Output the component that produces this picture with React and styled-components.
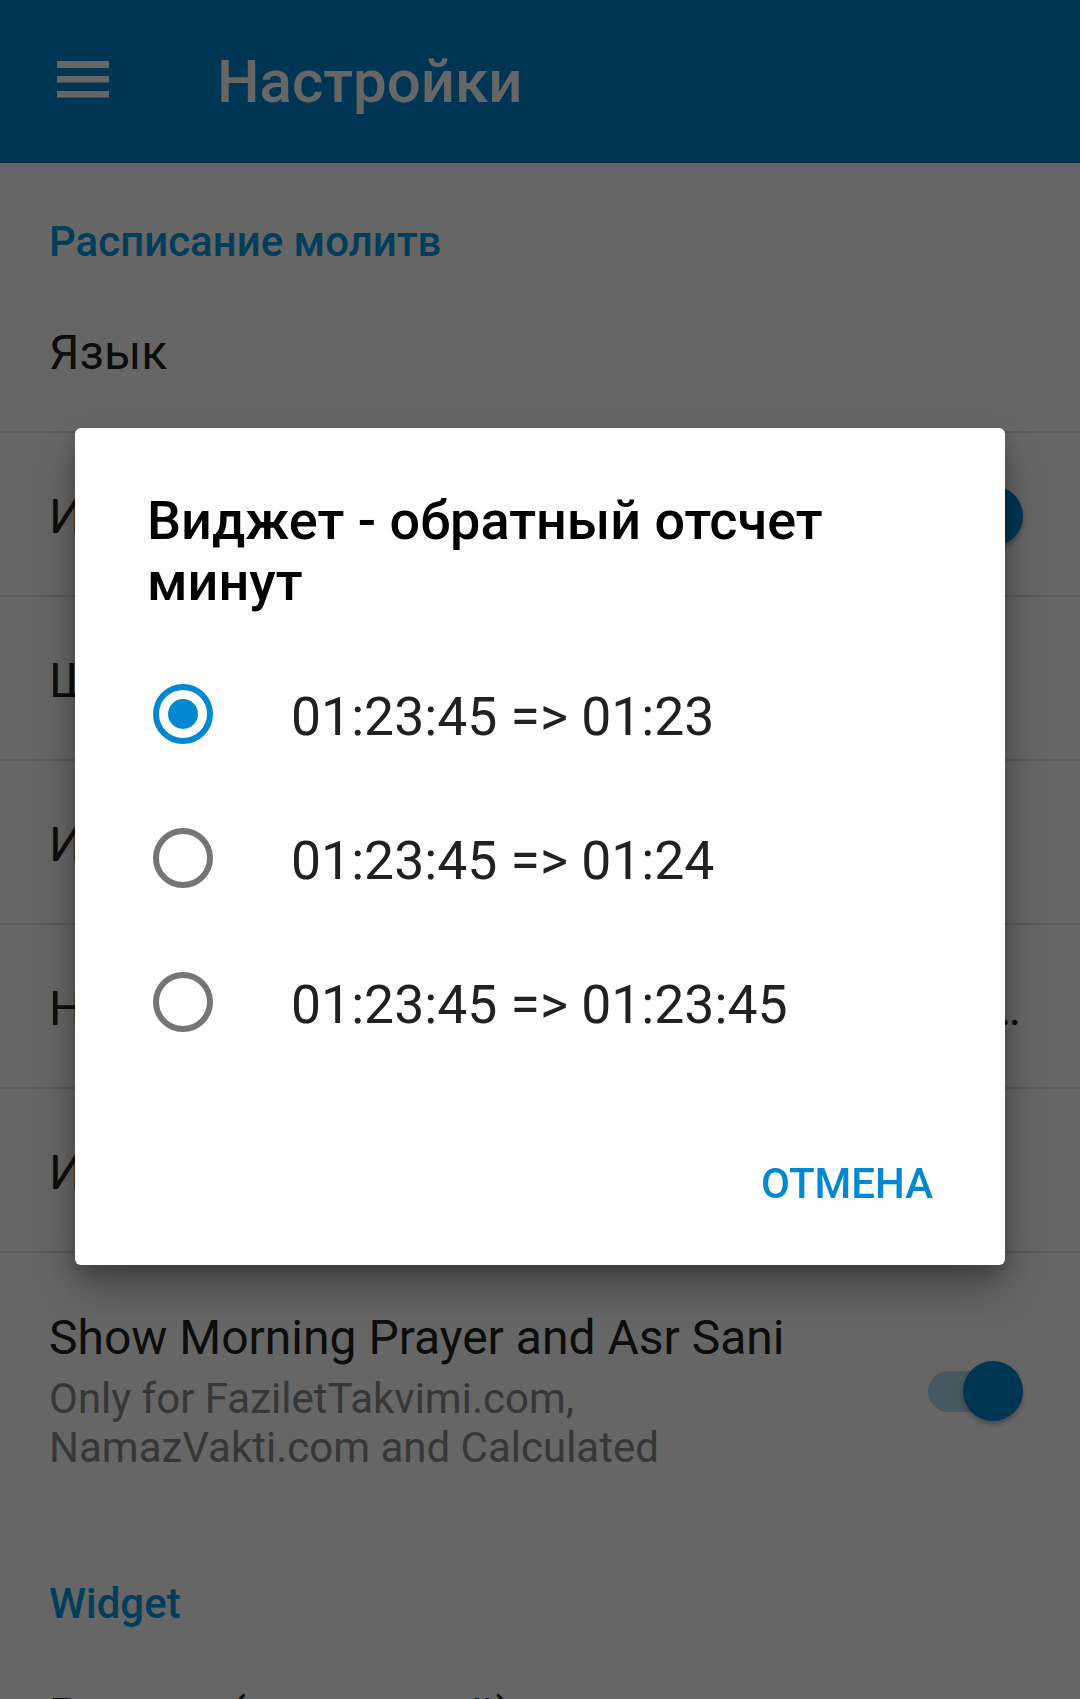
import React from "react";
import styled, { createGlobalStyle } from "styled-components";

const GlobalStyle = createGlobalStyle`
  html, body {
    margin: 0;
    height: 100%;
    overflow: hidden;
    background: #fff;
  }
  body {
    font-family: Roboto, "Noto Sans", "Liberation Sans", sans-serif;
  }
`;

const Screen = styled.div`
  height: 100vh;
  overflow: hidden;
  background: #fff;
`;

const AppBar = styled.header`
  display: flex;
  align-items: center;
  gap: 108px;
  height: 163px;
  padding-left: 57px;
  background: #0288d1;
  color: #fff;
`;

const MenuIcon = styled.svg`
  display: block;
  width: 52px;
  height: 37px;
  margin-bottom: 4px;
`;

const AppTitle = styled.h1`
  margin: 0;
  font-size: 60px;
  font-weight: 500;
  line-height: 70px;
`;

const Category = styled.div`
  padding: 54px 49px 3px;
  font-size: 42px;
  line-height: 49px;
  font-weight: 500;
  color: #039be5;
`;

const PrefRow = styled.div`
  display: flex;
  align-items: center;
  gap: 70px;
  box-sizing: border-box;
  min-height: 164px;
  padding: ${(p) => (p.$tall ? "56px 57px 53px 49px" : "4px 57px 0 49px")};
  border-bottom: ${(p) => (p.$divider ? "2px solid rgba(0, 0, 0, 0.12)" : "none")};
`;

const PrefText = styled.div`
  flex: 1;
  min-width: 0;
`;

const PrefTitle = styled.div`
  font-size: 48px;
  line-height: 57px;
  color: #212121;
  white-space: nowrap;
  overflow: hidden;
  text-overflow: ellipsis;
`;

const PrefSummary = styled.div`
  margin-top: 8px;
  font-size: 42px;
  line-height: 49px;
  color: #8a8a8a;
`;

const Switch = styled.div`
  position: relative;
  flex: none;
  width: 95px;
  height: 60px;
`;

const Track = styled.span`
  position: absolute;
  left: 0;
  top: 10px;
  width: 86px;
  height: 41px;
  border-radius: 21px;
  background: rgba(2, 136, 209, 0.3);
`;

const Thumb = styled.span`
  position: absolute;
  right: 0;
  top: 0;
  width: 60px;
  height: 60px;
  border-radius: 50%;
  background: #0288d1;
  box-shadow: 0 3px 5px rgba(0, 0, 0, 0.3);
`;

const Scrim = styled.div`
  position: fixed;
  inset: 0;
  display: flex;
  align-items: center;
  justify-content: center;
  padding-bottom: 6px;
  background: rgba(0, 0, 0, 0.6);
`;

const Dialog = styled.div`
  box-sizing: border-box;
  width: 930px;
  padding: 62px 0 57px;
  background: #fff;
  border-radius: 6px;
  box-shadow: 0 24px 48px rgba(0, 0, 0, 0.3), 0 10px 18px rgba(0, 0, 0, 0.22);
`;

const DialogTitle = styled.h2`
  margin: 0 0 30px;
  padding: 0 60px 0 72px;
  font-size: 54px;
  line-height: 61px;
  font-weight: 500;
  color: #000;
`;

const Option = styled.label`
  display: flex;
  align-items: center;
  gap: 78px;
  height: 144px;
  padding-left: 78px;
`;

const Radio = styled.span`
  box-sizing: border-box;
  display: flex;
  align-items: center;
  justify-content: center;
  flex: none;
  width: 60px;
  height: 60px;
  border-radius: 50%;
  border: 6px solid ${(p) => (p.$checked ? "#0288d1" : "#757575")};

  &::after {
    content: "";
    display: ${(p) => (p.$checked ? "block" : "none")};
    width: 30px;
    height: 30px;
    border-radius: 50%;
    background: #0288d1;
  }
`;

const OptionLabel = styled.span`
  padding-top: 5px;
  font-size: 53.5px;
  line-height: 62px;
  color: #212121;
`;

const Actions = styled.div`
  display: flex;
  justify-content: flex-end;
  margin-top: 85px;
  padding-right: 72px;
`;

const TextButton = styled.button`
  padding: 0;
  border: none;
  background: none;
  font-family: inherit;
  font-size: 42px;
  line-height: 49px;
  font-weight: 500;
  color: #0288d1;
`;

const prefs = [
  { title: "Язык", divider: true },
  { title: "Использовать 24-часовой формат", divider: true, toggle: true },
  { title: "Шрифт арабского текста", divider: true },
  { title: "Источник расписания", divider: true },
  { title: "Настройки уведомлений о наступлении времени каждой молитвы", divider: true },
  { title: "Игнорировать переход на летнее время", divider: true },
  {
    title: "Show Morning Prayer and Asr Sani",
    summary: "Only for FaziletTakvimi.com, NamazVakti.com and Calculated",
    toggle: true,
    tall: true,
  },
];

const options = ["01:23:45 => 01:23", "01:23:45 => 01:24", "01:23:45 => 01:23:45"];

const Toggle = () => (
  <Switch>
    <Track />
    <Thumb />
  </Switch>
);

export default function App() {
  return (
    <Screen>
      <GlobalStyle />
      <AppBar>
        <MenuIcon viewBox="0 0 52 37">
          <rect x="0" y="0" width="52" height="7" fill="#fff" />
          <rect x="0" y="15" width="52" height="6.5" fill="#fff" />
          <rect x="0" y="30" width="52" height="6.5" fill="#fff" />
        </MenuIcon>
        <AppTitle>Настройки</AppTitle>
      </AppBar>

      <Category>Расписание молитв</Category>
      {prefs.map((p) => (
        <PrefRow key={p.title} $divider={p.divider} $tall={p.tall}>
          <PrefText>
            <PrefTitle>{p.title}</PrefTitle>
            {p.summary && <PrefSummary>{p.summary}</PrefSummary>}
          </PrefText>
          {p.toggle && <Toggle />}
        </PrefRow>
      ))}

      <Category>Widget</Category>
      <PrefRow>
        <PrefText>
          <PrefTitle>Размер (маленький)</PrefTitle>
        </PrefText>
      </PrefRow>

      <Scrim>
        <Dialog>
          <DialogTitle>Виджет - обратный отсчет минут</DialogTitle>
          {options.map((o, i) => (
            <Option key={o}>
              <Radio $checked={i === 0} />
              <OptionLabel>{o}</OptionLabel>
            </Option>
          ))}
          <Actions>
            <TextButton>ОТМЕНА</TextButton>
          </Actions>
        </Dialog>
      </Scrim>
    </Screen>
  );
}
